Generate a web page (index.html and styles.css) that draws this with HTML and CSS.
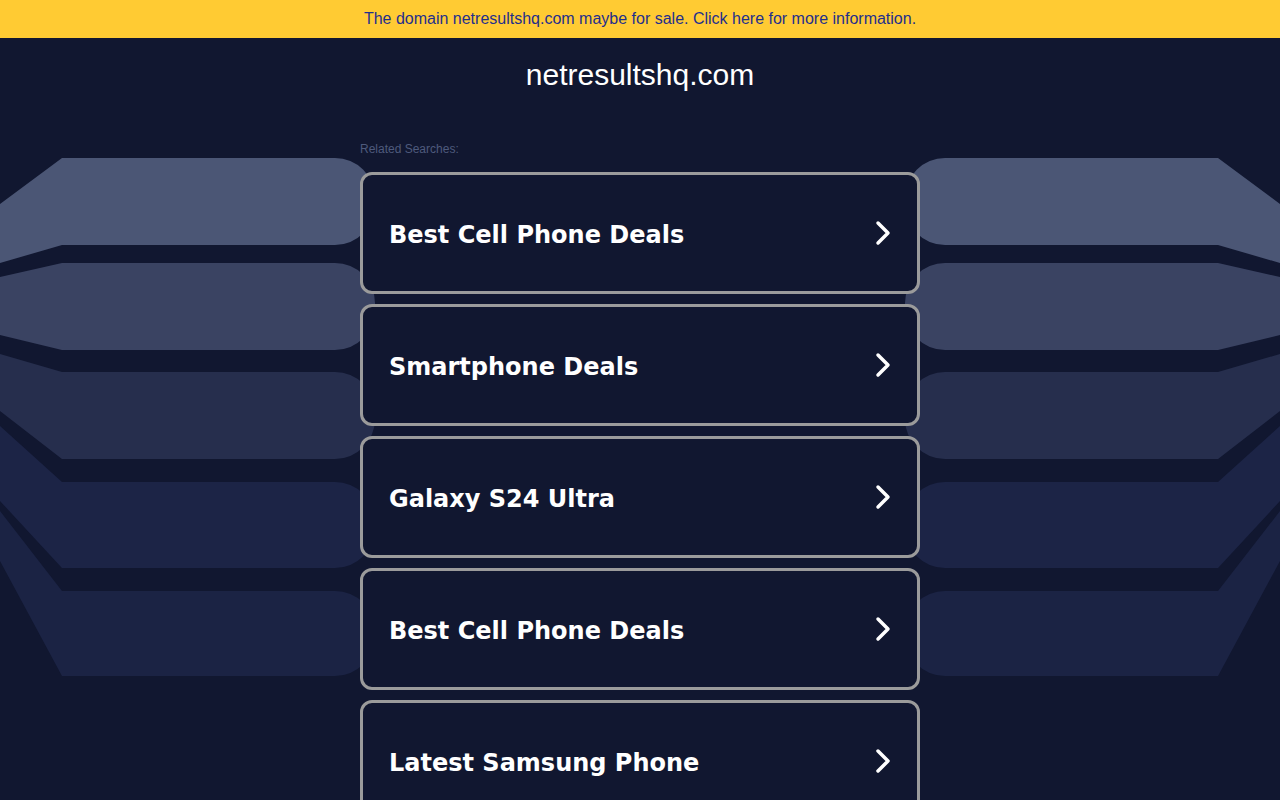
FILE: index.html
```html
<!DOCTYPE html>
<html>
<head>
<meta charset="utf-8">
<title>netresultshq.com</title>
<link rel="stylesheet" href="styles.css">
</head>
<body>
<div class="banner"><a href="#" class="banner-link">The domain netresultshq.com maybe for sale. Click here for more information.</a></div>
<div class="page">
  <svg class="bg" width="1280" height="762" viewBox="0 38 1280 762" aria-hidden="true">
    <g>
      <path class="b1" d="M0 204 L62 158 H335 A40 40 0 0 1 375 198 V205 A40 40 0 0 1 335 245 H62 L0 263 Z"/>
      <path class="b2" d="M0 277 L62 263 H335 A40 40 0 0 1 375 303 V310 A40 40 0 0 1 335 350 H62 L0 335 Z"/>
      <path class="b3" d="M0 354 L62 372 H335 A40 40 0 0 1 375 412 V419 A40 40 0 0 1 335 459 H62 L0 411 Z"/>
      <path class="b4" d="M0 426 L62 482 H335 A40 40 0 0 1 375 522 V528 A40 40 0 0 1 335 568 H62 L0 501 Z"/>
      <path class="b5" d="M0 511 L62 591 H335 A40 40 0 0 1 375 631 V636 A40 40 0 0 1 335 676 H62 L0 561 Z"/>
    </g>
    <g transform="translate(1280 0) scale(-1 1)">
      <path class="b1" d="M0 204 L62 158 H335 A40 40 0 0 1 375 198 V205 A40 40 0 0 1 335 245 H62 L0 263 Z"/>
      <path class="b2" d="M0 277 L62 263 H335 A40 40 0 0 1 375 303 V310 A40 40 0 0 1 335 350 H62 L0 335 Z"/>
      <path class="b3" d="M0 354 L62 372 H335 A40 40 0 0 1 375 412 V419 A40 40 0 0 1 335 459 H62 L0 411 Z"/>
      <path class="b4" d="M0 426 L62 482 H335 A40 40 0 0 1 375 522 V528 A40 40 0 0 1 335 568 H62 L0 501 Z"/>
      <path class="b5" d="M0 511 L62 591 H335 A40 40 0 0 1 375 631 V636 A40 40 0 0 1 335 676 H62 L0 561 Z"/>
    </g>
  </svg>
  <h1 class="domain">netresultshq.com</h1>
  <div class="related">
    <div class="related-label">Related Searches:</div>
    <ul class="links">
      <li><a href="#" class="link"><span class="label">Best Cell Phone Deals</span><svg class="chev" width="20" height="28" viewBox="0 0 20 28"><path d="M5 4 L15 14 L5 24" /></svg></a></li>
      <li><a href="#" class="link"><span class="label">Smartphone Deals</span><svg class="chev" width="20" height="28" viewBox="0 0 20 28"><path d="M5 4 L15 14 L5 24" /></svg></a></li>
      <li><a href="#" class="link"><span class="label">Galaxy S24 Ultra</span><svg class="chev" width="20" height="28" viewBox="0 0 20 28"><path d="M5 4 L15 14 L5 24" /></svg></a></li>
      <li><a href="#" class="link"><span class="label">Best Cell Phone Deals</span><svg class="chev" width="20" height="28" viewBox="0 0 20 28"><path d="M5 4 L15 14 L5 24" /></svg></a></li>
      <li><a href="#" class="link"><span class="label">Latest Samsung Phone</span><svg class="chev" width="20" height="28" viewBox="0 0 20 28"><path d="M5 4 L15 14 L5 24" /></svg></a></li>
    </ul>
  </div>
</div>
</body>
</html>
```

FILE: styles.css
```css
html, body {
  margin: 0;
  padding: 0;
  background: #111730;
  overflow: hidden;
  height: 800px;
}
body {
  font-family: "Liberation Sans", Arial, sans-serif;
}
.banner {
  height: 38px;
  background: #ffcb33;
  display: flex;
  align-items: center;
  justify-content: center;
}
.banner-link {
  color: #1f2f8c;
  text-decoration: none;
  font-size: 16px;
}
.page {
  position: relative;
  height: 762px;
  display: flex;
  flex-direction: column;
  align-items: center;
}
.bg {
  position: absolute;
  left: 0;
  top: 0;
  z-index: 0;
}
.b1 { fill: #4b5675; }
.b2 { fill: #3a4362; }
.b3 { fill: #262e4d; }
.b4 { fill: #1c2446; }
.b5 { fill: #1b2344; }
.domain {
  position: relative;
  z-index: 1;
  margin: 20px 0 0;
  height: 34px;
  font-weight: normal;
  font-size: 30px;
  line-height: 34px;
  color: #ffffff;
}
.related {
  position: relative;
  z-index: 1;
  width: 560px;
  margin-top: 50px;
}
.related-label {
  font-size: 12px;
  line-height: 14px;
  color: #4e5a7c;
  margin-bottom: 16px;
}
.links {
  list-style: none;
  margin: 0;
  padding: 0;
  display: flex;
  flex-direction: column;
  gap: 10px;
}
.link {
  box-sizing: border-box;
  height: 122px;
  border: 3px solid #9b9b9b;
  border-radius: 12px;
  background: #111730;
  display: flex;
  align-items: center;
  justify-content: space-between;
  padding: 0 24px 0 26px;
  text-decoration: none;
  color: #ffffff;
  font-family: "DejaVu Sans", Verdana, sans-serif;
  font-weight: bold;
  font-size: 24px;
}
.label {
  margin-top: 4px;
}
.chev {
  fill: none;
  stroke: #ffffff;
  stroke-width: 3.5;
  stroke-linecap: round;
  stroke-linejoin: round;
}
```
